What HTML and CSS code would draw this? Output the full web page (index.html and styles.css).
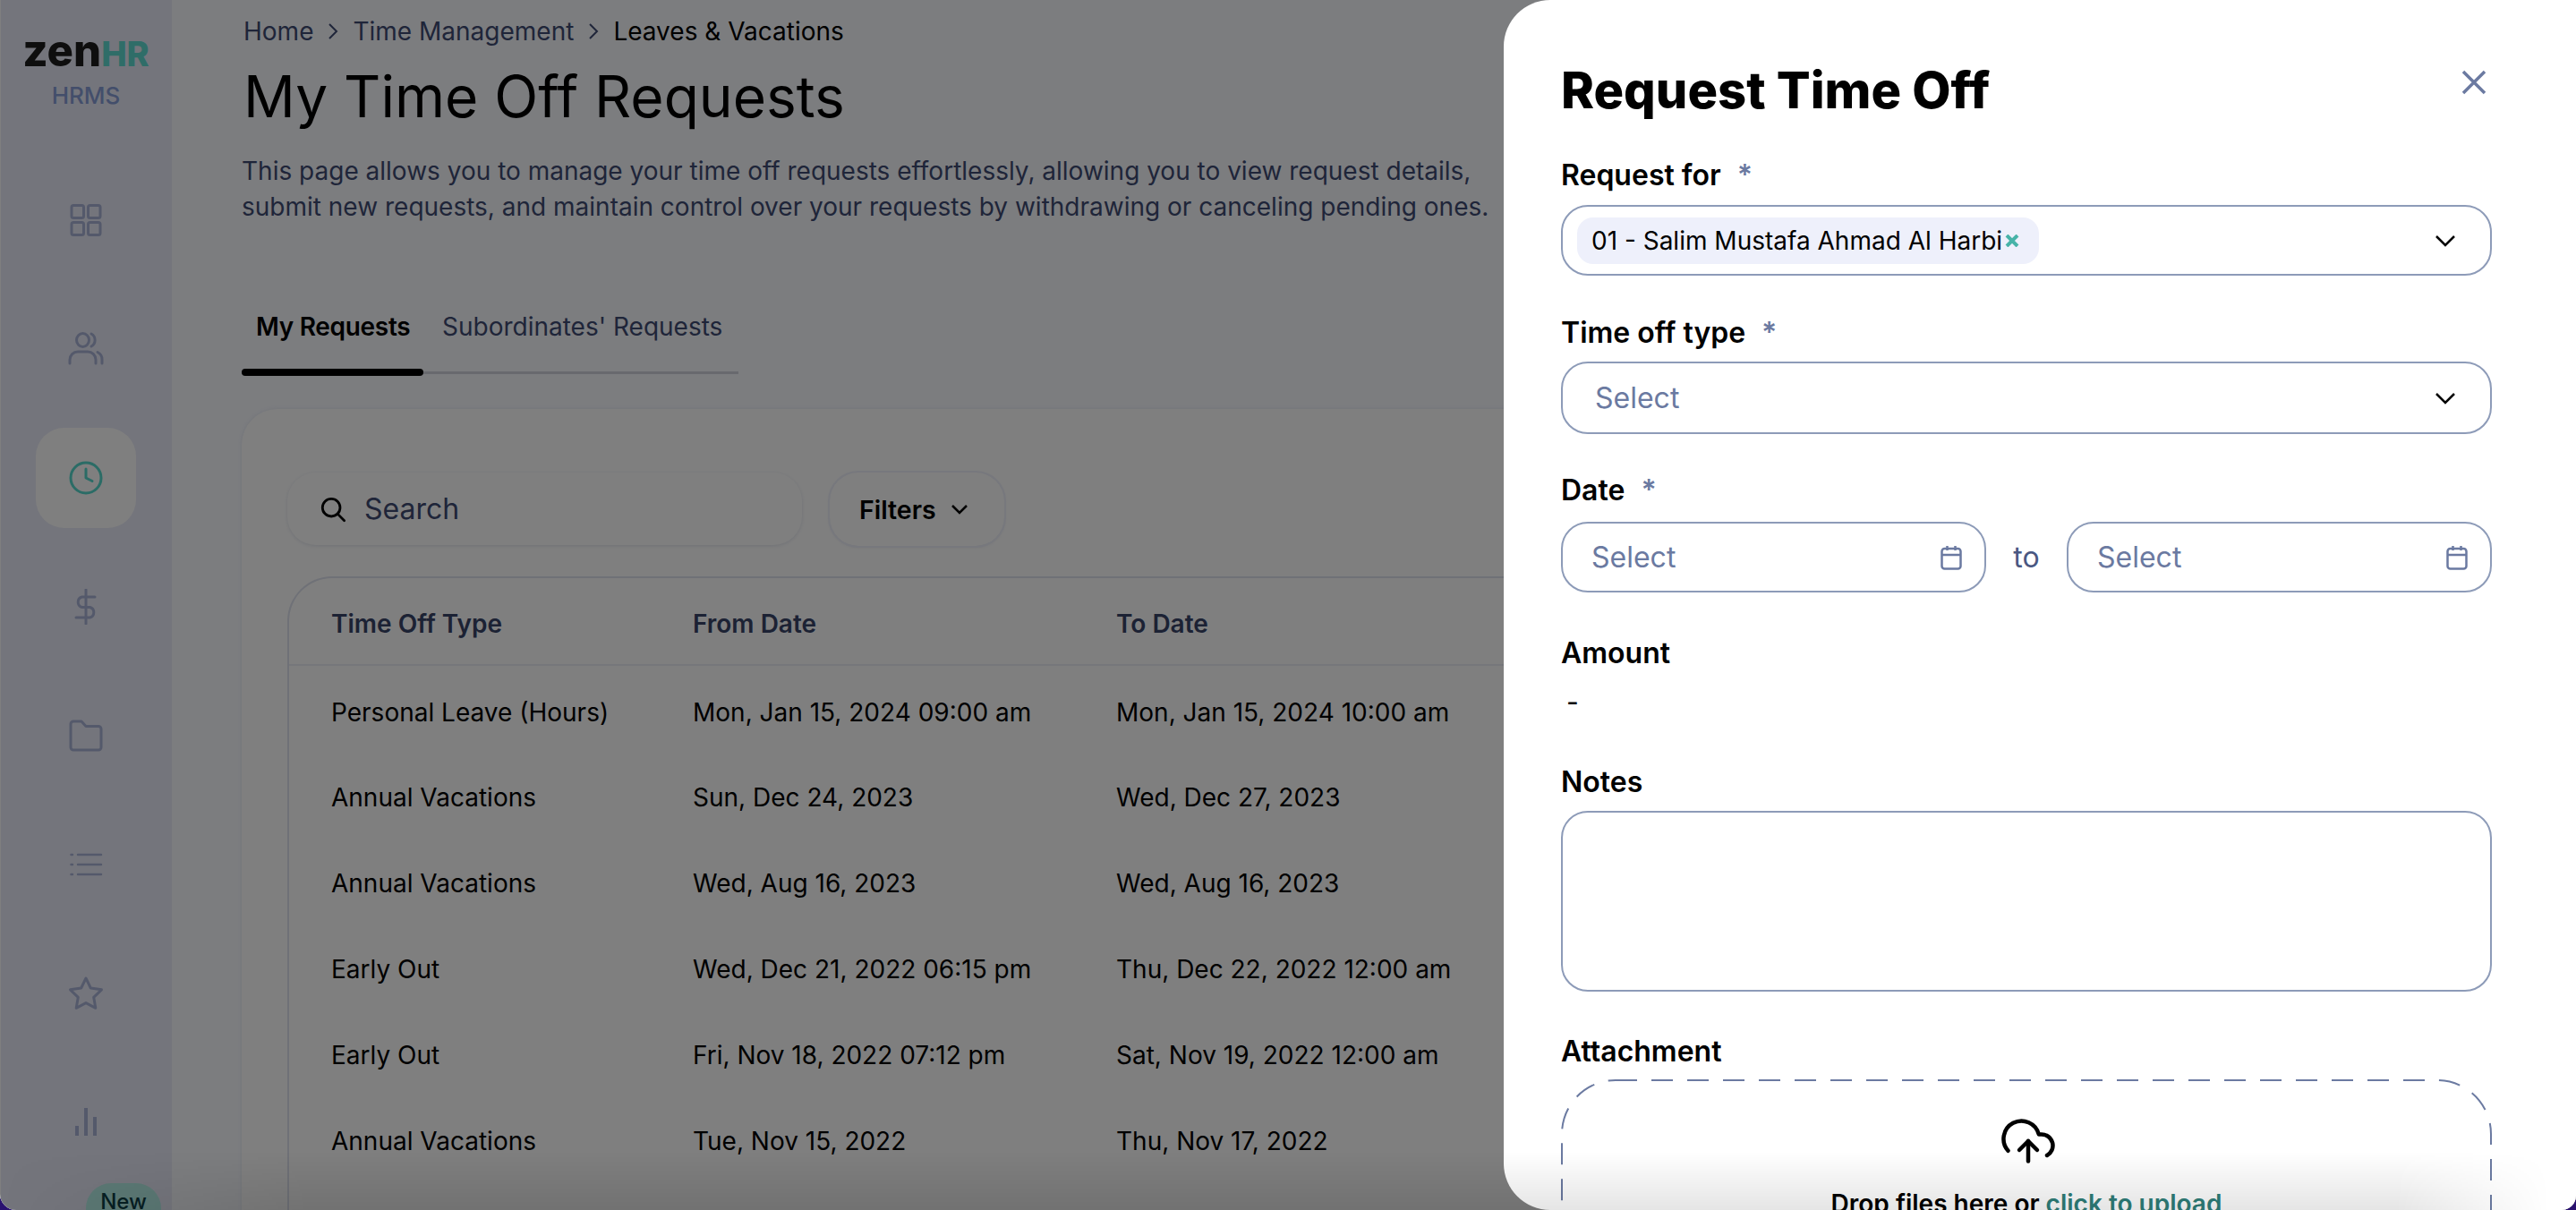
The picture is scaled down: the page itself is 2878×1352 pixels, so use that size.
FILE: index.html
```html
<!DOCTYPE html>
<html lang="en">
<head>
<meta charset="utf-8">
<title>My Time Off Requests</title>
<link rel="stylesheet" href="styles.css">
</head>
<body>
<div class="window">
  <div class="app">
    <aside class="sidebar">
      <div class="logo"><span class="logo-zen">zen</span><span class="logo-hr">HR</span></div>
      <div class="logo-sub">HRMS</div>
      <nav class="nav">
        <a class="nav-item"><svg class="nav-icon" viewBox="0 0 40 40"><rect x="4" y="3.500" width="13.500" height="14" rx="2"/><rect x="22.500" y="3.500" width="13.500" height="14" rx="2"/><rect x="4" y="22.500" width="13.500" height="14" rx="2"/><rect x="22.500" y="22.500" width="13.500" height="14" rx="2"/></svg></a>
        <a class="nav-item"><svg class="nav-icon" viewBox="0 0 40 40"><ellipse cx="16.500" cy="10" rx="7" ry="7.500"/><path d="M2 36v-4a9 9 0 0 1 9-9h11a9 9 0 0 1 9 9v4"/><path d="M26 3a8 8 0 0 1 0 14"/><path d="M33 23.500a9 9 0 0 1 5 8V36"/></svg></a>
        <a class="nav-item active"><svg class="nav-icon" viewBox="0 0 40 40"><circle cx="20" cy="20" r="17"/><path d="M20 10v10l7 3.500"/></svg></a>
        <a class="nav-item"><svg class="nav-icon" viewBox="0 0 40 40"><path d="M20 1v38"/><path d="M30 9H15.500a6 6 0 0 0 0 11.500h9a6 6 0 0 1 0 11.500H9"/></svg></a>
        <a class="nav-item"><svg class="nav-icon" viewBox="0 0 40 40"><path d="M3 7a3 3 0 0 1 3-3h9l5 5.500h14a3 3 0 0 1 3 3V33a3 3 0 0 1-3 3H6a3 3 0 0 1-3-3z"/></svg></a>
        <a class="nav-item"><svg class="nav-icon list" viewBox="0 0 40 40"><path d="M11 9h26M11 20h26M11 31h26"/><path d="M3.500 9h1.500M3.500 20h1.500M3.500 31h1.500"/></svg></a>
        <a class="nav-item"><svg class="nav-icon" viewBox="0 0 40 40"><path d="M20 3l5.300 11 12.200 1.800-8.800 8.500 2.100 12L20 30.600 9.200 36.300l2.100-12-8.800-8.500L14.700 14z"/></svg></a>
        <a class="nav-item"><svg class="nav-icon bars" viewBox="0 0 40 40"><path d="M10 35V24M20 35V4M30 35V14"/></svg></a>
      </nav>
      <span class="new-badge">New</span>
    </aside>
    <main class="main">
      <div class="crumbs"><span>Home</span><svg class="crumb-sep" viewBox="0 0 12 24"><path d="M2 4l8 8-8 8"/></svg><span>Time Management</span><svg class="crumb-sep" viewBox="0 0 12 24"><path d="M2 4l8 8-8 8"/></svg><span class="crumb-current">Leaves &amp; Vacations</span></div>
      <h1 class="page-title">My Time Off Requests</h1>
      <p class="page-desc">This page allows you to manage your time off requests effortlessly, allowing you to view request details,<br>submit new requests, and maintain control over your requests by withdrawing or canceling pending ones.</p>
      <div class="tabs"><div class="tab tab-active">My Requests</div><div class="tab">Subordinates' Requests</div></div>
      <section class="card">
        <div class="toolbar">
          <div class="search"><svg class="search-icon" viewBox="0 0 32 32"><circle cx="14" cy="14" r="10.500"/><path d="M22 22l7.500 7.500"/></svg><span>Search</span></div>
          <div class="filters">Filters<svg class="filter-chev" viewBox="0 0 24 24"><path d="M4 8l8 8 8-8"/></svg></div>
        </div>
        <div class="table-box">
          <table class="table">
            <thead><tr><th class="c1">Time Off Type</th><th class="c2">From Date</th><th>To Date</th></tr></thead>
            <tbody>
              <tr><td>Personal Leave (Hours)</td><td>Mon, Jan 15, 2024 09:00 am</td><td>Mon, Jan 15, 2024 10:00 am</td></tr>
              <tr><td>Annual Vacations</td><td>Sun, Dec 24, 2023</td><td>Wed, Dec 27, 2023</td></tr>
              <tr><td>Annual Vacations</td><td>Wed, Aug 16, 2023</td><td>Wed, Aug 16, 2023</td></tr>
              <tr><td>Early Out</td><td>Wed, Dec 21, 2022 06:15 pm</td><td>Thu, Dec 22, 2022 12:00 am</td></tr>
              <tr><td>Early Out</td><td>Fri, Nov 18, 2022 07:12 pm</td><td>Sat, Nov 19, 2022 12:00 am</td></tr>
              <tr><td>Annual Vacations</td><td>Tue, Nov 15, 2022</td><td>Thu, Nov 17, 2022</td></tr>
            </tbody>
          </table>
        </div>
      </section>
    </main>
  </div>
  <div class="backdrop"></div>
  <aside class="drawer">
    <div class="drawer-head">
      <h2 class="drawer-title">Request Time Off</h2>
      <svg class="close" viewBox="0 0 28 28"><path d="M2 2l24 24M26 2L2 26"/></svg>
    </div>
    <div class="group group-for">
      <label class="label">Request for<span class="req">*</span></label>
      <div class="field field-chip">
        <span class="chip">01 - Salim Mustafa Ahmad Al Harbi<svg class="chip-x" viewBox="0 0 16 14" preserveAspectRatio="none"><path d="M2 1l12 12M14 1L2 13"/></svg></span>
        <svg class="chev" viewBox="0 0 24 24"><path d="M2 7l10 10L22 7"/></svg>
      </div>
    </div>
    <div class="group">
      <label class="label">Time off type<span class="req">*</span></label>
      <div class="field field-select"><span class="ph">Select</span><svg class="chev" viewBox="0 0 24 24"><path d="M2 7l10 10L22 7"/></svg></div>
    </div>
    <div class="group group-date">
      <label class="label">Date<span class="req">*</span></label>
      <div class="date-row">
        <div class="field field-date"><span class="ph">Select</span><svg class="cal" viewBox="0 0 24 28"><rect x="1.500" y="4" width="21" height="22.500" rx="3"/><path d="M1.500 11h21M7.500 1v5M16.500 1v5"/></svg></div>
        <span class="to">to</span>
        <div class="field field-date"><span class="ph">Select</span><svg class="cal" viewBox="0 0 24 28"><rect x="1.500" y="4" width="21" height="22.500" rx="3"/><path d="M1.500 11h21M7.500 1v5M16.500 1v5"/></svg></div>
      </div>
    </div>
    <div class="group group-amount">
      <label class="label">Amount</label>
      <div class="amount">-</div>
    </div>
    <div class="group group-notes">
      <label class="label">Notes</label>
      <div class="field textarea"></div>
    </div>
    <div class="group group-attach">
      <label class="label">Attachment</label>
      <div class="drop">
        <svg class="drop-border" viewBox="0 0 1040 300"><rect x="1" y="1" width="1038" height="298" rx="60" ry="60"/></svg>
        <svg class="upload" viewBox="0 0 24 24"><path d="M16 16l-4-4-4 4"/><path d="M12 12v9"/><path d="M20.390 18.390A5 5 0 0 0 18 9h-1.260A8 8 0 1 0 3 16.300"/></svg>
        <div class="drop-text">Drop files here or <span class="link">click to upload</span></div>
      </div>
    </div>
  </aside>
  <div class="fade"></div>
</div>
</body>
</html>
```

FILE: styles.css
```css
* { box-sizing: border-box; }
html, body { margin: 0; height: 100%; overflow: hidden; }
body { background: #2a1270; font-family: Inter, "Liberation Sans", sans-serif; color: #000; }
.window { position: relative; width: 2878px; height: 1352px; overflow: hidden; border-radius: 0 0 16px 18px; background: #f8faff; }
.app { display: flex; height: 1352px; }

.sidebar { width: 192px; flex: none; background: #e9ebf8; border-left: 1px solid #fff; padding-right: 1px; display: flex; flex-direction: column; align-items: center; padding-top: 33px; position: relative; }
.logo { display: flex; align-items: baseline; line-height: 48px; }
.logo-zen { font-size: 49px; font-weight: 800; color: #1c1c1c; }
.logo-hr { font-size: 38px; font-weight: 800; color: #5edad0; }
.logo-sub { font-size: 26px; line-height: 36px; font-weight: 500; color: #869cd6; margin-top: 5px; }
.nav { display: flex; flex-direction: column; gap: 32px; margin-top: 65px; }
.nav-item { width: 112px; height: 112px; display: flex; align-items: center; justify-content: center; border-radius: 32px; }
.nav-icon { width: 40px; height: 40px; fill: none; stroke: #a9b3d6; stroke-width: 3; stroke-linecap: round; stroke-linejoin: round; }
.nav-item.active { background: #fff; }
.nav-item.active .nav-icon { stroke: #56d8cc; }
.list { stroke-width: 2.500; }
.bars { stroke-width: 4; stroke-linecap: butt; }
.new-badge { position: absolute; left: 95px; top: 1322px; width: 84px; height: 60px; border-radius: 28px; background: #b6f0e8; color: #0f3f46; font-size: 24px; line-height: 42px; text-align: center; font-weight: 500; }

.main { flex: 1; min-width: 0; padding: 15px 0 0 78px; }
.crumbs { display: flex; align-items: center; height: 40px; font-size: 28px; color: #3f4b73; padding-left: 2px; }
.crumb-sep { width: 12px; height: 24px; margin: 0 16px; fill: none; stroke: #3f4b73; stroke-width: 2; }
.crumb-current { color: #000; }
.page-title { margin: 13px 0 0 2px; font-size: 64px; line-height: 80px; font-weight: 400; }
.page-desc { margin: 23px 0 0; font-size: 28px; line-height: 40px; color: #3f4b73; }
.tabs { display: inline-flex; margin-top: 94px; border-bottom: 3px solid #d0d3dc; vertical-align: top; }
.tab { padding: 0 18px 30px 21px; font-size: 28px; line-height: 40px; color: #3f4b73; position: relative; }
.tab-active { flex: none; width: 203px; color: #000; font-weight: 600; letter-spacing: -0.3px; padding: 0 0 30px 16px; }
.tab-active::after { content: ""; position: absolute; left: 0; right: 0; bottom: -5px; height: 8px; border-radius: 4px; background: #000; }
.card { margin-top: 39px; background: #fff; border-radius: 40px 0 0 0; padding: 71px 0 0 51px; height: 900px; box-shadow: 0 0 4px rgba(107,122,161,.15); }
.toolbar { display: flex; gap: 31px; }
.search { width: 575px; height: 81px; border-radius: 32px; display: flex; align-items: center; padding-left: 36px; gap: 20px; box-shadow: 0 1px 4px rgba(107,122,161,.2); color: #3f4b73; font-size: 32px; }
.search-icon { width: 30px; height: 30px; fill: none; stroke: #000; stroke-width: 3; stroke-linecap: round; }
.filters { width: 195px; height: 82px; border-radius: 32px; display: flex; align-items: center; padding-left: 33px; gap: 14px; font-size: 28.500px; font-weight: 600; box-shadow: 0 0 0 2px #eef0fa, 0 1px 4px rgba(107,122,161,.2); }
.filter-chev { width: 24px; height: 24px; fill: none; stroke: #000; stroke-width: 2.500; }
.table-box { margin-top: 34px; border: 2px solid #dfe2ee; border-right: 0; border-bottom: 0; border-radius: 50px 0 0 0; height: 720px; }
.table { border-collapse: collapse; table-layout: fixed; width: 1400px; font-size: 28px; }
.c1 { width: 404px; }
.c2 { width: 473px; }
.table th { height: 97px; padding: 6px 0 0 47px; text-align: left; font-weight: 600; color: #384468; border-bottom: 2px solid #eceef6; }
.table td { height: 96px; padding: 8px 0 0 47px; color: #000; white-space: nowrap; }

.backdrop { position: absolute; inset: 0; background: rgba(0,0,0,.5); }
.drawer { position: absolute; left: 1680px; top: 0; width: 1198px; height: 1352px; background: #fff; border-radius: 52px 0 0 52px; padding: 65px 94px 0 64px; overflow: hidden; }
.drawer-head { display: flex; justify-content: space-between; align-items: flex-start; }
.drawer-title { margin: 0; font-size: 56px; line-height: 72px; font-weight: 800; }
.close { width: 28px; height: 28px; margin: 13px 6px 0 0; fill: none; stroke: #6b7aa1; stroke-width: 3.500; }
.group { margin-top: 44px; }
.group-for { margin-top: 39px; }
.label { display: block; font-size: 32px; line-height: 40px; font-weight: 600; }
.req { color: #6b7aa1; margin-left: 18px; font-weight: 600; }
.field { border: 2px solid #8d9bb8; border-radius: 30px; display: flex; align-items: center; background: #fff; position: relative; }
.field-chip { margin-top: 13px; height: 79px; padding-left: 16px; justify-content: space-between; }
.field-select { margin-top: 12px; height: 81px; padding-left: 36px; justify-content: space-between; }
.chip { display: flex; align-items: center; width: 516px; height: 52px; border-radius: 18px; background: #eef0fb; padding-left: 16px; font-size: 28px; white-space: nowrap; }
.chip-x { width: 16px; height: 14px; margin-left: 3px; fill: none; stroke: #47b3a8; stroke-width: 4; flex: none; }
.chev { width: 24px; height: 24px; margin-right: 38px; fill: none; stroke: #000; stroke-width: 2.500; flex: none; }
.ph { font-size: 32px; color: #6b7aa1; }
.group-date { margin-top: 43px; }
.date-row { display: flex; align-items: center; margin-top: 15px; }
.field-date { width: 475px; height: 79px; padding: 0 25px 0 32px; justify-content: space-between; flex: none; }
.to { width: 90px; text-align: center; font-size: 32px; color: #4a5882; }
.cal { width: 24px; height: 28px; fill: none; stroke: #6b7aa1; stroke-width: 2.500; }
.group-amount { margin-top: 48px; }
.amount { margin: 14px 0 0 6px; font-size: 30px; line-height: 40px; }
.group-notes { margin-top: 50px; }
.textarea { height: 202px; margin-top: 12px; }
.group-attach { margin-top: 47px; }
.drop { position: relative; margin-top: 11px; height: 300px; display: flex; flex-direction: column; align-items: center; padding-top: 39px; }
.drop-border { position: absolute; left: 0; top: 0; width: 100%; height: 100%; fill: none; stroke: #6b7aa1; stroke-width: 2; stroke-dasharray: 24 16; }
.upload { width: 60px; height: 60px; margin-left: 3px; fill: none; stroke: #000; stroke-width: 1.800; stroke-linecap: round; stroke-linejoin: round; }
.drop-text { margin-top: 22px; font-size: 28px; line-height: 36px; font-weight: 600; }
.link { color: #2f7f7a; }
.fade { position: absolute; left: 0; right: 0; bottom: 0; height: 65px; background: linear-gradient(to bottom, rgba(0,0,0,0), rgba(0,0,0,.1)); -webkit-mask-image: linear-gradient(to right, transparent 0, #000 12%, #000 93%, transparent 99%); mask-image: linear-gradient(to right, transparent 0, #000 12%, #000 93%, transparent 99%); pointer-events: none; }
```
